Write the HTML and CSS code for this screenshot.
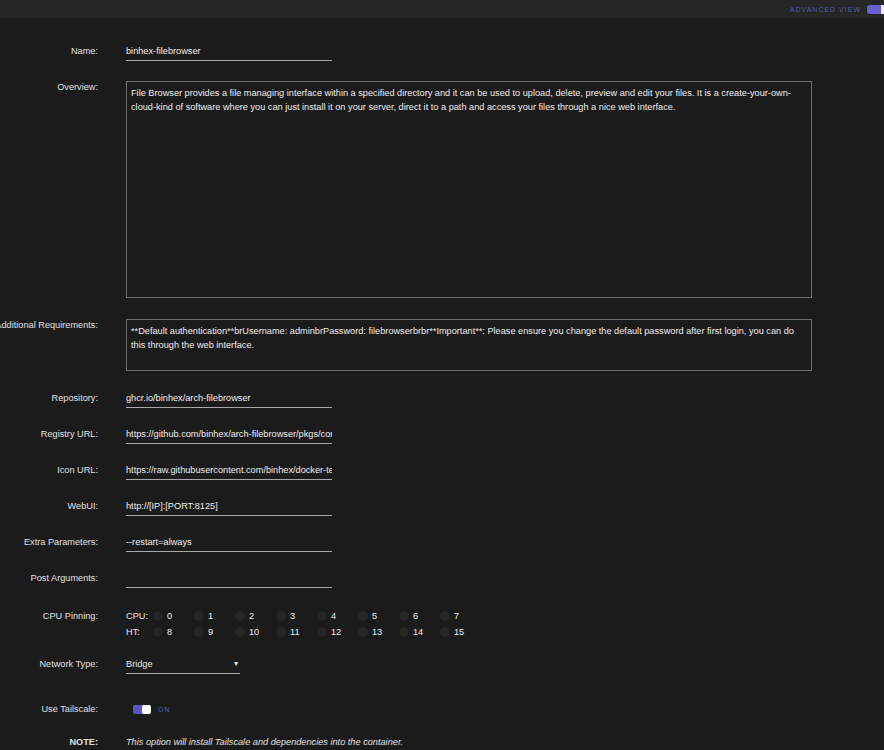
FILE: index.html
```html
<!DOCTYPE html>
<html lang="en">
<head>
  <meta charset="UTF-8" />
  <title>Update Container</title>
  <link rel="stylesheet" href="styles.css">
</head>
<body>
<div class="topbar">
  <span class="advanced">Advanced View</span>
  <span class="viewToggle"></span>
</div>

<form class="template">
  <div class="row nameRow">
    <label>Name:</label>
    <input class="field" value="binhex-filebrowser" />
  </div>
  <div class="row overRow">
    <label class="top">Overview:</label>
    <textarea class="box overview">File Browser provides a file managing interface within a specified directory and it can be used to upload, delete, preview and edit your files. It is a create-your-own-cloud-kind of software where you can just install it on your server, direct it to a path and access your files through a nice web interface.</textarea>
  </div>
  <div class="row reqRow">
    <label class="top">Additional Requirements:</label>
    <textarea class="box requires">**Default authentication**brUsername: adminbrPassword: filebrowserbrbr**Important**: Please ensure you change the default password after first login, you can do this through the web interface.</textarea>
  </div>
  <div class="row">
    <label>Repository:</label>
    <input class="field" value="ghcr.io/binhex/arch-filebrowser" />
  </div>
  <div class="row">
    <label>Registry URL:</label>
    <input class="field" value="https://github.com/binhex/arch-filebrowser/pkgs/container/arch-filebrowser" />
  </div>
  <div class="row">
    <label>Icon URL:</label>
    <input class="field" value="https://raw.githubusercontent.com/binhex/docker-templates/master/binhex/images/filebrowser-icon.png" />
  </div>
  <div class="row">
    <label>WebUI:</label>
    <input class="field" value="http://[IP]:[PORT:8125]" />
  </div>
  <div class="row">
    <label>Extra Parameters:</label>
    <input class="field" value="--restart=always" />
  </div>
  <div class="row postRow">
    <label>Post Arguments:</label>
    <input class="field" value="" />
  </div>
  <div class="row">
    <label class="top">CPU Pinning:</label>
    <div class="cpus">
      <div class="cpuLine"><span class="cpuTag">CPU:</span><div class="cores" id="cpuRow"></div></div>
      <div class="cpuLine"><span class="cpuTag">HT:</span><div class="cores" id="htRow"></div></div>
    </div>
  </div>
  <div class="row net">
    <label>Network Type:</label>
    <div class="select"><span>Bridge</span><span class="caret">▾</span></div>
  </div>
  <div class="row">
    <label>Use Tailscale:</label>
    <div class="switchWrap"><span class="switch"><span class="knob"></span></span><span class="on">ON</span></div>
  </div>
  <div class="row">
    <label class="strong">NOTE:</label>
    <em class="note">This option will install Tailscale and dependencies into the container.</em>
  </div>
</form>

<script>
  // cpu pinning checkboxes, 0-7 and their hyperthreads 8-15
  function fillCores(id, start) {
    const row = document.getElementById(id);
    for (let i = start; i < start + 8; i++) {
      const c = document.createElement("span");
      c.className = "core";
      c.innerHTML = `<span class="dot"></span><span class="num">${i}</span>`;
      row.appendChild(c);
    }
  }
  fillCores("cpuRow", 0);
  fillCores("htRow", 8);
</script>
</body>
</html>
```

FILE: styles.css
```css
body {
  margin: 0;
  background: #1c1b1b;
  color: #e6e6e6;
  font-family: "Liberation Sans", Arial, sans-serif;
  font-size: 9.2px;
}
.topbar {
  height: 18px;
  background: #262626;
  display: flex;
  justify-content: flex-end;
  align-items: center;
  gap: 6px;
}
.advanced {
  text-transform: uppercase;
  letter-spacing: 1px;
  font-size: 7px;
  color: #4e5ca8;
}
.viewToggle {
  width: 14px; height: 9px;
  border-radius: 3px 0 0 3px;
  background: #6a5fd0;
  border-right: 3px solid #eee;
}
.template { padding-top: 23px; }
.row {
  display: grid;
  grid-template-columns: 98px 1fr;
  column-gap: 28px;
  margin-bottom: 16px;
}
.nameRow { margin-bottom: 20px; }
.overRow { margin-bottom: 21px; }
.reqRow { margin-bottom: 17px; }
.postRow { margin-bottom: 22px; }
.row label {
  display: flex;
  justify-content: flex-end;
  white-space: nowrap;
  line-height: 20px;
  color: #e0e0e0;
}
.row label.top { line-height: 12px; }
.row label.strong { font-weight: bold; line-height: 14px; }
.field {
  width: 206px;
  height: 20px;
  box-sizing: border-box;
  padding: 0;
  background: transparent;
  border: none;
  border-bottom: 1px solid #a8a8a8;
  color: #eee;
  font: inherit;
  outline: none;
}
.box {
  width: 686px;
  box-sizing: border-box;
  background: transparent;
  border: 1px solid #6e6e6e;
  color: #eee;
  font: inherit;
  line-height: 14px;
  padding: 4px;
  resize: none;
  display: block;
}
.overview { height: 217px; }
.requires { height: 52px; }
.cpus { display: flex; flex-direction: column; gap: 4px; }
.cpuLine { display: flex; align-items: center; height: 12px; }
.cpuTag { width: 27px; }
.cores { display: flex; }
.core { display: flex; align-items: center; width: 41px; }
.dot {
  width: 10px; height: 10px;
  border-radius: 50%;
  background: #262626;
  margin-right: 4px;
}
.num { color: #eee; }
.net { margin-bottom: 25px; }
.select {
  width: 114px;
  height: 20px;
  box-sizing: border-box;
  border-bottom: 1px solid #a8a8a8;
  display: flex;
  justify-content: space-between;
  align-items: center;
  padding-right: 2px;
}
.caret { font-size: 8px; }
.switchWrap { display: flex; align-items: center; gap: 7px; padding-left: 7px; height: 20px; }
.switch {
  width: 18px; height: 9px;
  border-radius: 2px;
  background: #5a55c4;
  position: relative;
}
.knob {
  position: absolute;
  right: 0; top: 0;
  width: 9px; height: 9px;
  border-radius: 2px;
  background: #fff;
}
.on { color: #4e5ca8; font-size: 7px; letter-spacing: 1px; }
.note { line-height: 14px; color: #e0e0e0; }
```
